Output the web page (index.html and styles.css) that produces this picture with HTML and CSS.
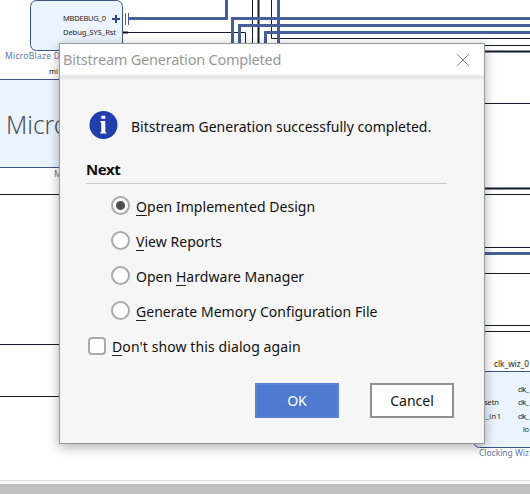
FILE: index.html
```html
<!DOCTYPE html>
<html lang="en">
<head>
<meta charset="utf-8">
<title>Bitstream Generation Completed</title>
<link rel="stylesheet" href="styles.css">
</head>
<body>
<svg class="diagram" width="530" height="494" viewBox="0 0 530 494">
  <g class="block">
    <rect x="30.5" y="0.5" width="92" height="50" rx="6"/>
    <rect x="-5" y="79.5" width="90" height="88"/>
    <rect x="473.5" y="371.5" width="80" height="76" rx="6"/>
  </g>
  <g class="wire">
    <path d="M123 32.5H245.5V60M252.5 0V60M271.5 0V38.5H530M470 45.5H530M470 103.5H530M470 194.5H530M470 247.5H530M470 273.5H530M470 325.5H530M470 331.5H530M0 194.5H70M0 344.5H70M0 396.5H70"/>
  </g>
  <path class="thick-halo" d="M258.5 0V60M470 51.5H530M470 188.5H530"/>
  <path class="wire" d="M258.5 0V60M470 51.5H530M470 188.5H530"/>
  <path class="bus" d="M129 18.5H226.5V0M232.5 60V18.5H530M239.5 60V25.5H530M265.5 60V32.5H530M278.5 0V60M470 253.5H530"/>
  <path class="pin" d="M125.5 13V25M128.5 13V25"/>
  <path class="plus" d="M112 19H120M116 15V23"/>
  <path class="stub" d="M123 32.5H128"/>
  <g class="port">
    <text x="63" y="21" textLength="43">MBDEBUG_0</text>
    <text x="63" y="35" textLength="53">Debug_SYS_Rst</text>
    <text x="49" y="74">mi</text>
    <text class="name" x="494" y="367" textLength="35" lengthAdjust="spacingAndGlyphs">clk_wiz_0</text>
    <text x="518" y="392" textLength="11">clk_</text>
    <text x="480" y="405" textLength="19">esetn</text>
    <text x="518" y="405" textLength="11">clk_</text>
    <text x="481" y="419" textLength="20">k_in1</text>
    <text x="518" y="419" textLength="11">clk_</text>
    <text x="523" y="432" textLength="6">lo</text>
  </g>
  <g class="caption">
    <text x="5" y="59" textLength="55">MicroBlaze D</text>
    <text x="54" y="177">M</text>
    <text x="479" y="456" textLength="50">Clocking Wiz</text>
  </g>
  <text class="logo" x="6" y="134" textLength="62" lengthAdjust="spacingAndGlyphs">Micro</text>
</svg>
<div class="edge"></div>
<main class="dialog">
  <header class="titlebar">
    <h1>Bitstream Generation Completed</h1>
    <svg class="close" width="14" height="14" viewBox="0 0 14 14"><path d="M1 1L13 13M13 1L1 13"/></svg>
  </header>
  <section class="content">
    <div class="message">
      <svg width="29" height="28" viewBox="0 0 29 28"><circle cx="14.5" cy="14" r="14" fill="#213eaa"/><path d="M12.3 4.8h4v3h-4zM11.3 10H16.3v11h1v1.5h-6v-1.5h1v-9.5h-1z" fill="#fff"/></svg>
      <p>Bitstream Generation successfully completed.</p>
    </div>
    <h2>Next</h2>
    <div class="options">
      <label><i class="radio on"></i><span><u>O</u>pen Implemented Design</span></label>
      <label><i class="radio"></i><span><u>V</u>iew Reports</span></label>
      <label><i class="radio"></i><span>Open <u>H</u>ardware Manager</span></label>
      <label><i class="radio"></i><span><u>G</u>enerate Memory Configuration File</span></label>
    </div>
    <label class="again"><i class="check"></i><span><u>D</u>on't show this dialog again</span></label>
    <footer><button class="primary">OK</button><button>Cancel</button></footer>
  </section>
</main>
</body>
</html>
```

FILE: styles.css
```css
* { box-sizing: border-box; margin: 0; padding: 0; }
body { position: relative; width: 530px; height: 494px; overflow: hidden; background: #fff; font-family: "Noto Sans", sans-serif; color: #111; }
.diagram { display: block; }
.block rect { fill: #ebf4fe; stroke: #3c5487; }
.wire { fill: none; stroke: #141b2b; stroke-width: 1; }
.thick-halo { fill: none; stroke: #858a96; stroke-width: 3; }
.bus { fill: none; stroke: #455f9b; stroke-width: 3; }
.pin { fill: none; stroke: #455f9b; stroke-width: 1; }
.plus { fill: none; stroke: #2f477f; stroke-width: 2; }
.stub { stroke: #111; stroke-width: 2; }
.port { font-size: 7.5px; fill: #222; }
.port .name { font-size: 9px; }
.caption { font-size: 8.5px; fill: #6076a8; }
.logo { font-size: 26px; font-weight: 300; fill: #4c5258; }
.edge { position: absolute; left: 0; right: 0; bottom: 0; height: 14px; border-top: 1px solid #ddd; background: linear-gradient(#f8f8f8 3px, #c0c0c0 3px); }
.dialog { position: absolute; left: 59px; top: 43px; width: 426px; height: 401px; display: flex; flex-direction: column; border: 1px solid #989898; background: #f6f6f6; box-shadow: 0 3px 11px rgba(0,0,0,.32); }
.titlebar { height: 35px; flex: none; display: flex; align-items: center; justify-content: space-between; padding: 0 14px 0 3px; background: #fff; border-bottom: 4px solid #e7e7e7; }
h1 { margin-top: -1px; font-size: 14.5px; font-weight: 400; line-height: 20px; color: #999; white-space: nowrap; letter-spacing: -.22px; }
.close path { stroke: #858585; stroke-width: 1; fill: none; }
.content { padding: 32px 30px 0 26px; font-size: 14px; line-height: 20px; white-space: nowrap; }
.message { display: flex; align-items: center; gap: 13px; height: 28px; margin-left: 3px; }
.message svg { flex: none; }
.message p { padding-top: 3px; }
h2 { width: 361px; height: 45px; padding-top: 19px; border-bottom: 1px solid #c9c9c9; font-size: 15px; line-height: 22px; letter-spacing: -.4px; }
.options { padding: 4px 0 0 25px; }
label { display: flex; align-items: center; height: 35px; gap: 6px; }
label span { padding-top: 2px; letter-spacing: .04px; }
label u { text-decoration: none; box-shadow: inset 0 -1px #222; display: inline-block; height: 19px; }
.radio { width: 19px; height: 19px; flex: none; border: 2px solid #aaa; border-radius: 50%; background: #fff; }
.radio.on { background: radial-gradient(circle, #505050 4px, #fff 5px); }
.check { width: 18px; height: 18px; flex: none; border: 2px solid #aaa; border-radius: 4px; background: #fff; }
.again { margin-left: 2px; }
.again span { letter-spacing: .1px; }
footer { display: flex; gap: 31px; margin: 20px 0 0 169px; }
button { width: 84px; height: 35px; padding-top: 1px; border: 2px solid #909090; background: #fff; font: 14px/20px "Noto Sans", sans-serif; color: #111; }
.primary { border-color: #5d82d2; background: #4e7bd0; color: #fff; }
```
